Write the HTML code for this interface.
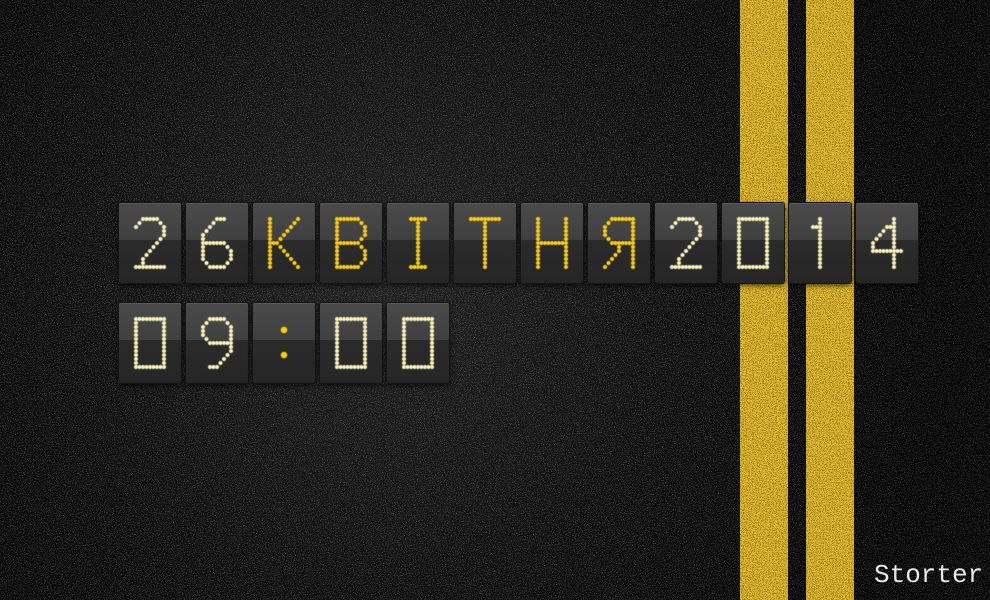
<!DOCTYPE html>
<html><head><meta charset="utf-8"><style>
html,body{margin:0;padding:0}
body{width:990px;height:600px;overflow:hidden;position:relative;background:#0b0b0b;font-family:"Liberation Sans",sans-serif}
#bg{position:absolute;left:0;top:0}
.tile{position:absolute;width:62px;height:80px;border-radius:2px;background:linear-gradient(#4a4a4a 0,#404040 46%,#2b2b2b 46%,#262626 100%);box-shadow:0 0 0 1px #151515,0 2px 6px rgba(0,0,0,.8),inset 0 1px 0 #5a5a5a}
.tile span{position:absolute;left:0;top:0;width:62px;line-height:80px;text-align:center;color:transparent;font-size:40px}
.tile svg{position:absolute;left:0;top:0}
.st{position:absolute;left:874px;top:560px;color:#e8e8e8;font:26px "Liberation Mono",monospace}
</style></head><body>
<svg id="bg" width="990" height="600">
<defs>
<filter id="n" x="0" y="0" width="100%" height="100%"><feTurbulence type="fractalNoise" baseFrequency="1.1" numOctaves="2" seed="3"/><feColorMatrix type="matrix" values="0 0 0 0 1  0 0 0 0 1  0 0 0 0 1  0 0 0 4 -2.1"/></filter>
<filter id="y" x="0" y="0" width="100%" height="100%"><feTurbulence type="fractalNoise" baseFrequency="1.3" numOctaves="1" seed="7"/><feColorMatrix type="matrix" values="0 0 0 0 0  0 0 0 0 0  0 0 0 0 0  0 0 0 4 -2"/></filter>
<radialGradient id="g" cx="380" cy="290" r="560" gradientUnits="userSpaceOnUse"><stop offset="0" stop-color="#1e1e1e"/><stop offset="0.55" stop-color="#0d0d0d"/><stop offset="1" stop-color="#030303"/></radialGradient>
</defs>
<rect width="990" height="600" fill="url(#g)"/>
<rect width="990" height="600" filter="url(#n)" opacity="0.35"/>
<rect x="740" y="0" width="48" height="600" fill="#e8c030"/>
<rect x="806" y="0" width="48" height="600" fill="#e8c030"/>
<rect x="740" y="0" width="48" height="600" filter="url(#y)" opacity="0.8"/>
<rect x="806" y="0" width="48" height="600" filter="url(#y)" opacity="0.8"/>
</svg>
<div id="tiles"></div>
<div class="st">Storter</div>
<script>
var G={
'2':['01110','10001','00001','00010','00100','01000','11111'],
'6':['00110','01000','10000','11110','10001','10001','01110'],
'К':['10001','10010','10100','11000','10100','10010','10001'],
'В':['11110','10001','10001','11110','10001','10001','11110'],
'І':['01110','00100','00100','00100','00100','00100','01110'],
'Т':['11111','00100','00100','00100','00100','00100','00100'],
'Н':['10001','10001','10001','11111','10001','10001','10001'],
'Я':['01111','10001','10001','01111','00101','01001','10001'],
'0':['11111','10001','10001','10001','10001','10001','11111'],
'1':['00100','01100','00100','00100','00100','00100','00100'],
'4':['00010','00110','01010','10010','11111','00010','00010'],
'9':['01110','10001','10001','01111','00001','00010','01100'],
':':['00000','00000','00100','00000','00100','00000','00000']};
function on(g,r,c){return r>=0&&r<7&&c>=0&&c<5&&g[r][c]=='1';}
function tile(ch,x,y,col){
 var h='<div class="tile" style="left:'+x+'px;top:'+y+'px"><span>'+ch+'</span><svg width="62" height="80">';
 var g=G[ch],pts=[];
 function P(cx,cy){pts.push([cx,cy]);}
 for(var r=0;r<7;r++)for(var c=0;c<5;c++)if(on(g,r,c)){
  var cx=17+c*7,cy=16+r*8;
  if(ch==':'){cy=r==2?27:52;P(cx,cy);continue;}
  P(cx,cy);
  if(on(g,r,c+1))P(cx+3.5,cy);
  if(on(g,r+1,c))P(cx,cy+4);
  if(on(g,r+1,c+1)&&!on(g,r,c+1)&&!on(g,r+1,c))P(cx+3.5,cy+4);
  if(on(g,r+1,c-1)&&!on(g,r,c-1)&&!on(g,r+1,c))P(cx-3.5,cy+4);
 }
 var rr=ch==':'?3:1.75;
 pts.forEach(function(p){h+='<circle cx="'+p[0]+'" cy="'+p[1]+'" r="'+(rr+0.9)+'" fill="'+col+'" opacity="0.3"/><circle cx="'+p[0]+'" cy="'+p[1]+'" r="'+rr+'" fill="'+col+'"/>';});
 return h+'</svg></div>';
}
var s='',a='26КВІТНЯ2014'.split('');
for(var i=0;i<12;i++){var ch=a[i];var col=/[0-9]/.test(ch)?'#f8eeb8':'#f7cc10';s+=tile(ch,119+i*67,203,col);}
var b='09:00'.split('');
for(var i=0;i<5;i++){var ch=b[i];s+=tile(ch,119+i*67,303,ch==':'?'#f7cc10':'#f8eeb8');}
document.getElementById('tiles').innerHTML=s;
</script>
</body></html>
